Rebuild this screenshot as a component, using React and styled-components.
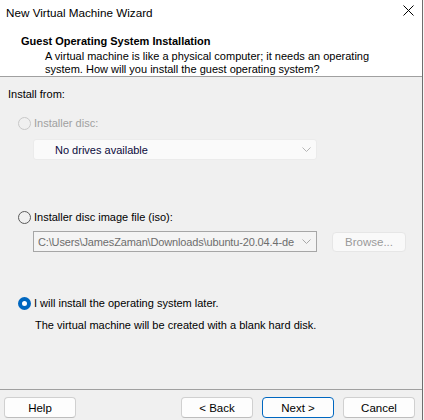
import React from 'react';
import styled, { createGlobalStyle } from 'styled-components';

const GlobalStyle = createGlobalStyle`
  html, body {
    margin: 0;
    padding: 0;
    background: #f6f6f6;
  }
  body {
    font-family: "Liberation Sans", Arial, sans-serif;
    font-size: 11px;
    color: #000;
  }
`;

const Window = styled.div`
  width: 422px;
  height: 420px;
  display: flex;
  flex-direction: column;
  background: #f0f0f0;
  border-right: 1px solid #6e6e6e;
  overflow: hidden;
`;

const TitleBar = styled.div`
  height: 24px;
  flex-shrink: 0;
  display: flex;
  align-items: center;
  justify-content: space-between;
  padding: 0 8px 0 6px;
  background: #fff;
  font-size: 11.7px;
`;

const CloseIcon = styled.svg`
  width: 11px;
  height: 11px;
  margin-top: -4px;
`;

const Banner = styled.div`
  box-sizing: border-box;
  flex-shrink: 0;
  background: #fff;
  padding: 10px 0 0 21px;
  height: 53px;
  border-bottom: 1px solid #a0a0a0;
`;

const BannerTitle = styled.div`
  font-weight: bold;
  line-height: 14px;
`;

const BannerText = styled.div`
  margin: 2px 0 0 24px;
  line-height: 13px;
  white-space: nowrap;
`;

const Body = styled.div`
  flex: 1;
  display: flex;
  flex-direction: column;
  padding: 9px 8px 0;
`;

const Label = styled.div`
  line-height: 16px;
`;

const RadioRow = styled.label`
  display: flex;
  align-items: center;
  gap: 3px;
  margin: ${p => p.$mt}px 0 0 10px;
  height: 16px;
  color: ${p => (p.$disabled ? '#a0a0a0' : '#000')};
`;

const RadioDot = styled.span`
  box-sizing: border-box;
  width: 13px;
  height: 13px;
  border-radius: 50%;
  border: ${p =>
    p.$checked ? '4px solid #0067c0' : p.$disabled ? '1px solid #c8c8c8' : '1px solid #5a5a5a'};
  background: ${p => (p.$checked ? '#fff' : 'transparent')};
`;

const Combo = styled.div`
  box-sizing: border-box;
  flex-shrink: 0;
  width: 284px;
  height: 21px;
  margin: ${p => p.$mt}px 0 0 25px;
  display: flex;
  align-items: center;
  justify-content: space-between;
  gap: 3px;
  padding: 0 5px 0 ${p => p.$pl}px;
  background: ${p => (p.$flat ? '#fafafa' : '#f4f4f4')};
  border: 1px solid ${p => (p.$flat ? '#ebebeb' : '#a6a6a6')};
  border-radius: ${p => (p.$flat ? 3 : 0)}px;
  color: ${p => p.$color};
`;

const ComboText = styled.span`
  flex: 1;
  min-width: 0;
  overflow: hidden;
  white-space: nowrap;
  letter-spacing: -0.15px;
`;

const Chevron = styled.svg`
  width: 9px;
  height: 5px;
  flex-shrink: 0;
`;

const FieldRow = styled.div`
  display: flex;
  align-items: center;
  gap: 15px;
  margin-top: 6px;
`;

const Button = styled.button`
  box-sizing: border-box;
  flex-shrink: 0;
  width: ${p => p.$w || 72}px;
  height: ${p => p.$h || 21}px;
  padding: 0;
  font: inherit;
  font-size: 11.5px;
  border-radius: 4px;
  background: ${p => (p.$disabled ? '#f9f9f9' : '#fdfdfd')};
  border: 1px solid ${p => (p.$primary ? '#0067c0' : p.$disabled ? '#e6e6e6' : '#d0d0d0')};
  border-bottom-color: ${p => (p.$primary ? '#0067c0' : p.$disabled ? '#e6e6e6' : '#bdbdbd')};
  color: ${p => (p.$disabled ? '#9a9a9a' : '#000')};
`;

const Note = styled.div`
  margin: 6px 0 0 27px;
  line-height: 16px;
`;

const Footer = styled.div`
  box-sizing: border-box;
  flex-shrink: 0;
  height: 31px;
  border-top: 1px solid #a0a0a0;
  display: flex;
  align-items: flex-start;
  padding: 7px 7px 0 4px;
  gap: 9px;
`;

const Spacer = styled.div`
  flex: 1;
`;

const chevron = color => (
  <Chevron viewBox="0 0 9 5">
    <path d="M0.5 0.5 L4.5 4.5 L8.5 0.5" fill="none" stroke={color} strokeWidth="1" />
  </Chevron>
);

export default function App() {
  return (
    <>
      <GlobalStyle />
      <Window>
        <TitleBar>
          <span>New Virtual Machine Wizard</span>
          <CloseIcon viewBox="0 0 11 11">
            <path d="M0.5 0.5 L10.5 10.5 M10.5 0.5 L0.5 10.5" stroke="#000" strokeWidth="1" />
          </CloseIcon>
        </TitleBar>
        <Banner>
          <BannerTitle>Guest Operating System Installation</BannerTitle>
          <BannerText>
            A virtual machine is like a physical computer; it needs an operating
            <br />
            system. How will you install the guest operating system?
          </BannerText>
        </Banner>
        <Body>
          <Label>Install from:</Label>
          <RadioRow $mt={13} $disabled>
            <RadioDot $disabled />
            Installer disc:
          </RadioRow>
          <Combo $mt={8} $pl={21} $flat $color="#0a0a3c">
            <span>No drives available</span>
            {chevron('#b5b5b5')}
          </Combo>
          <RadioRow $mt={49}>
            <RadioDot />
            Installer disc image file (iso):
          </RadioRow>
          <FieldRow>
            <Combo $mt={0} $pl={4} $color="#6d6d6d">
              <ComboText>C:\Users\JamesZaman\Downloads\ubuntu-20.04.4-de</ComboText>
              {chevron('#a8a8a8')}
            </Combo>
            <Button $disabled $w={74} $h={20}>Browse...</Button>
          </FieldRow>
          <RadioRow $mt={43}>
            <RadioDot $checked />
            I will install the operating system later.
          </RadioRow>
          <Note>The virtual machine will be created with a blank hard disk.</Note>
        </Body>
        <Footer>
          <Button>Help</Button>
          <Spacer />
          <Button>&lt; Back</Button>
          <Button $primary>Next &gt;</Button>
          <Button>Cancel</Button>
        </Footer>
      </Window>
    </>
  );
}
